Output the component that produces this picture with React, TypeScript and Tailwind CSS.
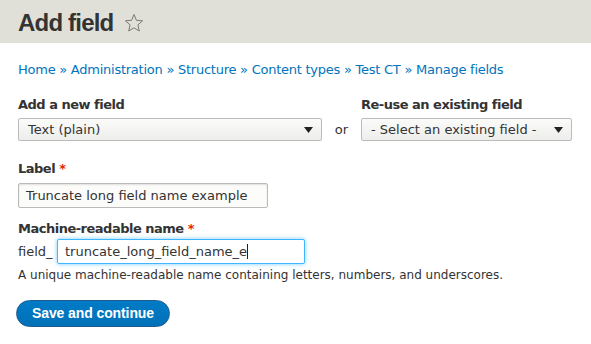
const font = { fontFamily: '"DejaVu Sans", "Noto Sans", sans-serif' };
const arial = { fontFamily: '"Liberation Sans", Arial, sans-serif' };

const Caret = () => (
  <svg width="9" height="6" viewBox="0 0 9 6" className="shrink-0">
    <path d="M0 0 H9 L4.5 6 Z" fill="#222" />
  </svg>
);

const Star = () => (
  <svg width="20" height="20" viewBox="0 0 20 20" className="ml-[11px]">
    <path
      d="M10 1.5 L12.4 7.3 L18.6 7.8 L13.9 11.9 L15.3 18 L10 14.8 L4.7 18 L6.1 11.9 L1.4 7.8 L7.6 7.3 Z"
      fill="none"
      stroke="#7a7a72"
      strokeWidth="1"
      strokeLinejoin="round"
    />
  </svg>
);

const Select = ({ text, width }: { text: string; width: string }) => (
  <div
    className={`${width} h-[23px] flex items-center justify-between pl-[9px] pr-[8px] rounded-[2px] border border-[#bbb] bg-gradient-to-b from-[#fbfbf9] to-[#ededeb] text-[13px] text-[#333]`}
  >
    <span>{text}</span>
    <Caret />
  </div>
);

const Crumb = ({ children }: { children: string }) => (
  <a className="text-[#0074bd]" href="#">
    {children}
  </a>
);

const App = () => {
  const crumbs = ['Home', 'Administration', 'Structure', 'Content types', 'Test CT', 'Manage fields'];
  return (
    <div className="w-[591px] h-[344px] bg-white text-[#333]" style={font}>
      <div className="h-[43px] bg-[#e0e0d8] flex items-center pl-[18px] pt-[2px]">
        <h1 className="text-[24px] font-bold text-[#333] leading-none tracking-[-0.8px]" style={arial}>
          Add field
        </h1>
        <Star />
      </div>

      <div className="px-[18px]">
        <nav className="mt-[19px] text-[13px] leading-[16px] tracking-[-0.25px] text-[#0074bd]">
          {crumbs.map((c, i) => (
            <span key={c}>
              <Crumb>{c}</Crumb>
              {i < crumbs.length - 1 && <span className="text-[#0074bd]"> » </span>}
            </span>
          ))}
        </nav>

        <div className="mt-[19px] flex items-end">
          <div className="flex flex-col">
            <label className="text-[13px] font-bold leading-[16px] mb-[5px] tracking-[-0.5px]">
              Add a new field
            </label>
            <Select text="Text (plain)" width="w-[304px]" />
          </div>
          <span className="w-[39px] text-center text-[13px] h-[23px] leading-[23px] text-[#333]">or</span>
          <div className="flex flex-col">
            <label className="text-[13px] font-bold leading-[16px] mb-[5px] tracking-[-0.5px]">
              Re-use an existing field
            </label>
            <Select text="- Select an existing field -" width="w-[211px]" />
          </div>
        </div>

        <div className="mt-[20px]">
          <label className="block text-[13px] font-bold leading-[16px] tracking-[-0.5px]">
            Label <span className="text-[#e32700]">*</span>
          </label>
          <div className="mt-[6px] w-[250px] h-[25px] border border-[#bbb] rounded-[2px] bg-[#fcfcfa] flex items-center px-[7px] text-[13px] shadow-[inset_0_1px_2px_rgba(0,0,0,0.12)]">
            Truncate long field name example
          </div>
        </div>

        <div className="mt-[13px]">
          <label className="block text-[13px] font-bold leading-[16px] tracking-[-0.5px]">
            Machine-readable name <span className="text-[#e32700]">*</span>
          </label>
          <div className="mt-[2px] flex items-center">
            <span className="text-[13px] w-[39px]">field_</span>
            <div className="w-[248px] h-[25px] border border-[#40b6ff] rounded-[2px] bg-white flex items-center px-[7px] text-[13px] shadow-[0_0_4px_rgba(64,182,255,0.7)]">
              truncate_long_field_name_e
              <span className="w-px h-[15px] bg-[#222]" />
            </div>
          </div>
          <p className="mt-[4px] text-[12px] leading-[15px] text-[#333]">
            A unique machine-readable name containing letters, numbers, and underscores.
          </p>
        </div>

        <button
          type="button"
          className="mt-[17px] -ml-[2px] w-[154px] h-[27px] rounded-full bg-gradient-to-b from-[#007bc6] to-[#0071b8] border border-[#1e5c90] text-white text-[14px] font-bold tracking-[-0.1px]"
          style={arial}
        >
          Save and continue
        </button>
      </div>
    </div>
  );
};

export default App;
